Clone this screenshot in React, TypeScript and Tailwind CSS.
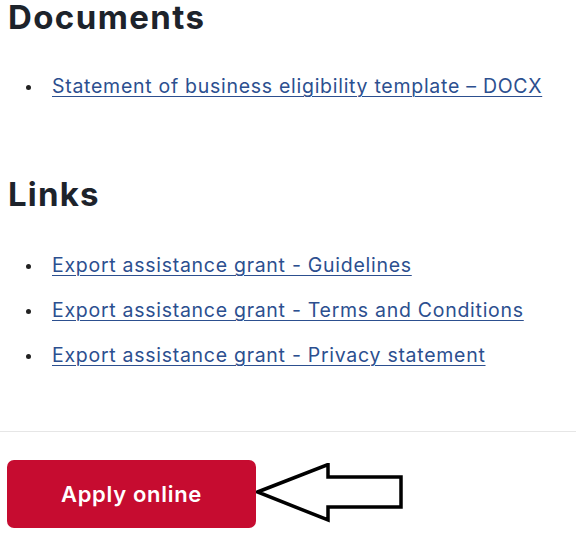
import React from "react";

interface LinkItem {
  label: string;
  href: string;
}

const documents: LinkItem[] = [
  { label: "Statement of business eligibility template – DOCX", href: "#" },
];

const links: LinkItem[] = [
  { label: "Export assistance grant - Guidelines", href: "#" },
  { label: "Export assistance grant - Terms and Conditions", href: "#" },
  { label: "Export assistance grant - Privacy statement", href: "#" },
];

function BulletList({ items }: { items: LinkItem[] }) {
  return (
    <ul className="flex flex-col gap-[17px]">
      {items.map((item) => (
        <li key={item.label} className="flex items-center h-[28px]">
          <span className="w-[5px] h-[5px] rounded-full bg-[#222] ml-[18px] mr-[21px] mt-[2px]" />
          <a
            href={item.href}
            className="text-[19.5px] leading-[28px] tracking-[0.72px] text-[#2c4f8f] underline underline-offset-[3px] decoration-1"
          >
            {item.label}
          </a>
        </li>
      ))}
    </ul>
  );
}

export default function App() {
  return (
    <div className="w-[576px] h-[534px] overflow-hidden bg-white font-['Inter',sans-serif]">
      <div className="px-2">
        <h2 className="text-[33px] leading-[40px] font-bold tracking-[1.4px] text-[#1d232b] mt-[-3px]">
          Documents
        </h2>
        <div className="mt-[35px]">
          <BulletList items={documents} />
        </div>

        <h2 className="text-[33px] leading-[40px] font-bold tracking-[1.2px] text-[#1d232b] mt-[74px]">
          Links
        </h2>
        <div className="mt-[37px]">
          <BulletList items={links} />
        </div>
      </div>

      <div className="mt-[62px] border-t border-[#e6e6e6]" />

      <div className="flex items-center px-[7px] mt-[28px]">
        <button className="w-[249px] h-[68px] rounded-[7px] bg-[#c60c30] text-white text-[22px] font-semibold tracking-[0.7px]">
          Apply online
        </button>
        {/* arrow pointing at the button */}
        <svg width="150" height="62" viewBox="0 0 150 62" className="shrink-0">
          <polygon
            points="1.5,29 72,1.5 72,14 145,14 145,44 72,44 72,57"
            fill="white"
            stroke="black"
            strokeWidth="3.5"
            strokeLinejoin="miter"
          />
        </svg>
      </div>
    </div>
  );
}
